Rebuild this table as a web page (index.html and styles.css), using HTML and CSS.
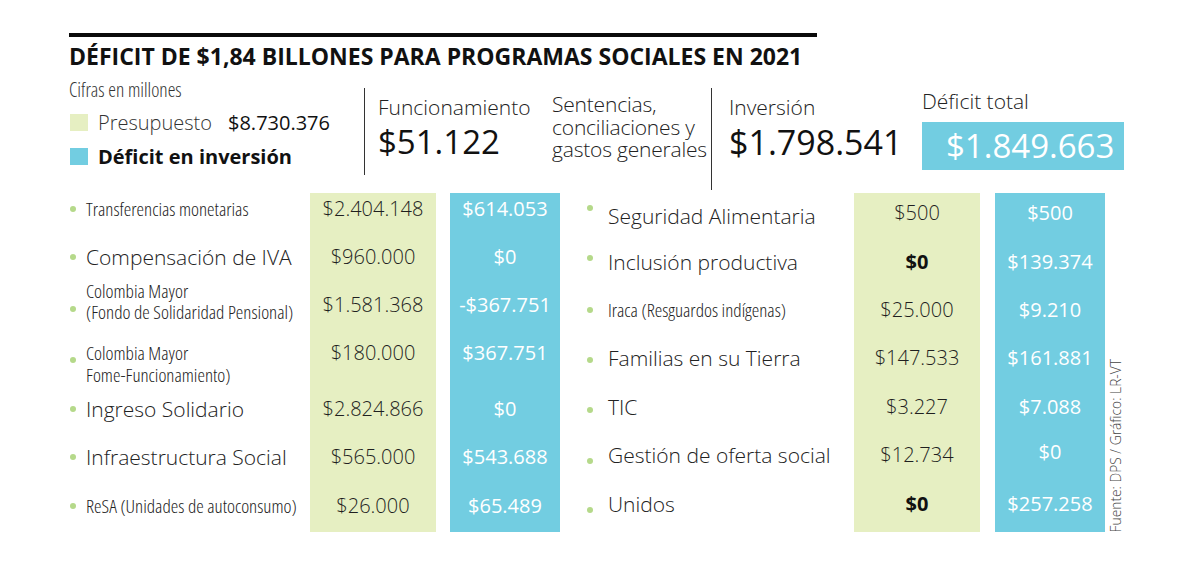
FILE: index.html
```html
<!DOCTYPE html>
<html lang="es">
<head>
<meta charset="utf-8">
<title>Déficit de $1,84 billones para programas sociales en 2021</title>
<link rel="stylesheet" href="styles.css">
</head>
<body>
<div class="page">
  <div class="rule"></div>
  <h1 class="title">DÉFICIT DE $1,84 BILLONES PARA PROGRAMAS SOCIALES EN 2021</h1>

  <div class="top">
    <div class="legend">
      <div class="cifras">Cifras en millones</div>
      <div class="leg-row">
        <span class="sq sq-green"></span>
        <span class="leg-label leg-label-w">Presupuesto</span>
        <span class="leg-amount">$8.730.376</span>
      </div>
      <div class="leg-row leg-row-2">
        <span class="sq sq-blue"></span>
        <span class="leg-label leg-bold">Déficit en inversión</span>
      </div>
    </div>
    <div class="vline vline-1"></div>
    <div class="stat stat-func">
      <div class="stat-label">Funcionamiento</div>
      <div class="stat-value">$51.122</div>
    </div>
    <div class="sentencias">
      <div class="sent-line">Sentencias,</div>
      <div class="sent-line">conciliaciones y</div>
      <div class="sent-line">gastos generales</div>
    </div>
    <div class="vline vline-2"></div>
    <div class="stat stat-inv">
      <div class="stat-label">Inversión</div>
      <div class="stat-value">$1.798.541</div>
    </div>
    <div class="stat stat-total">
      <div class="stat-label">Déficit total</div>
      <div class="total-box">$1.849.663</div>
    </div>
  </div>

  <div class="tables">
    <div class="table table-left">
      <div class="lab"><span class="dot"></span><span class="txt narrow">Transferencias monetarias</span></div>
      <div class="pres">$2.404.148</div>
      <div class="def">$614.053</div>

      <div class="lab"><span class="dot"></span><span class="txt big">Compensación de IVA</span></div>
      <div class="pres">$960.000</div>
      <div class="def">$0</div>

      <div class="lab two-a"><span class="dot"></span><span class="txt narrow">Colombia Mayor<br>(Fondo de Solidaridad Pensional)</span></div>
      <div class="pres">$1.581.368</div>
      <div class="def">-$367.751</div>

      <div class="lab two-b"><span class="dot"></span><span class="txt narrow">Colombia Mayor<br>Fome-Funcionamiento)</span></div>
      <div class="pres">$180.000</div>
      <div class="def">$367.751</div>

      <div class="lab"><span class="dot"></span><span class="txt big">Ingreso Solidario</span></div>
      <div class="pres">$2.824.866</div>
      <div class="def">$0</div>

      <div class="lab"><span class="dot"></span><span class="txt big">Infraestructura Social</span></div>
      <div class="pres">$565.000</div>
      <div class="def">$543.688</div>

      <div class="lab"><span class="dot"></span><span class="txt narrow">ReSA (Unidades de autoconsumo)</span></div>
      <div class="pres">$26.000</div>
      <div class="def">$65.489</div>
    </div>

    <div class="table table-right">
      <div class="lab"><span class="dot"></span><span class="txt big">Seguridad Alimentaria</span></div>
      <div class="pres">$500</div>
      <div class="def">$500</div>

      <div class="lab"><span class="dot"></span><span class="txt big">Inclusión productiva</span></div>
      <div class="pres strong">$0</div>
      <div class="def">$139.374</div>

      <div class="lab"><span class="dot"></span><span class="txt narrow">Iraca (Resguardos indígenas)</span></div>
      <div class="pres">$25.000</div>
      <div class="def">$9.210</div>

      <div class="lab"><span class="dot"></span><span class="txt big">Familias en su Tierra</span></div>
      <div class="pres">$147.533</div>
      <div class="def">$161.881</div>

      <div class="lab"><span class="dot"></span><span class="txt big">TIC</span></div>
      <div class="pres">$3.227</div>
      <div class="def">$7.088</div>

      <div class="lab"><span class="dot"></span><span class="txt big">Gestión de oferta social</span></div>
      <div class="pres">$12.734</div>
      <div class="def def-up">$0</div>

      <div class="lab"><span class="dot"></span><span class="txt big">Unidos</span></div>
      <div class="pres strong">$0</div>
      <div class="def">$257.258</div>
    </div>

    <div class="source">Fuente: DPS / Gráfico: LR-VT</div>
  </div>
</div>
</body>
</html>
```

FILE: styles.css
```css
* {
  box-sizing: border-box;
  margin: 0;
  padding: 0;
}

body {
  margin: 0;
  background: #ffffff;
  font-family: "Open Sans", "Noto Sans", sans-serif;
  color: #1f1f1f;
}

.page {
  width: 1200px;
  height: 568px;
  padding: 33px 0 0 69px;
  overflow: hidden;
}

.rule {
  width: 748px;
  height: 4px;
  background: #0a0a0a;
}

.title {
  margin-top: 5px;
  font-size: 23px;
  line-height: 28px;
  font-weight: 700;
  letter-spacing: 0;
  color: #111111;
  white-space: nowrap;
}

/* ---------- top summary ---------- */
.top {
  display: flex;
  height: 110px;
  margin-top: 10px;
}

.legend {
  width: 295px;
  flex: none;
}

.cifras,
.narrow {
  font-family: "Open Sans", "Noto Sans", sans-serif;
  font-stretch: 75%;
}

.cifras {
  font-size: 19.5px;
  line-height: 20px;
  font-weight: 300;
  color: #333333;
}

.leg-row {
  display: flex;
  align-items: center;
  height: 28px;
  margin-top: 8px;
}

.leg-row-2 {
  margin-top: 6px;
}

.sq {
  width: 18px;
  height: 17px;
  margin-left: 1px;
  margin-right: 10px;
  flex: none;
}

.sq-green { background: #e6efc2; }
.sq-blue { background: #72cde1; }

.leg-label {
  font-size: 20px;
  font-weight: 300;
  color: #333333;
  white-space: nowrap;
}

.leg-label-w {
  width: 130px;
}

.leg-bold {
  font-weight: 700;
  font-size: 20px;
  color: #111111;
}

.leg-amount {
  font-size: 20px;
  color: #111111;
}

.vline {
  width: 1px;
  flex: none;
  margin-top: 8px;
  background: #333333;
}

.vline-1 { height: 87px; }
.vline-2 { height: 102px; }

.stat {
  flex: none;
}

.stat-label {
  font-size: 21px;
  line-height: 26px;
  font-weight: 300;
  color: #222222;
  white-space: nowrap;
}

.stat-value {
  margin-top: 2px;
  font-size: 33px;
  line-height: 40px;
  color: #111111;
  white-space: nowrap;
}

.stat-inv .stat-value {
  font-size: 34px;
}

.stat-func {
  margin-left: 13px;
  width: 174px;
  padding-top: 14px;
}

.sentencias {
  flex: none;
  width: 159px;
  padding-top: 13px;
  font-size: 21px;
  font-weight: 300;
  letter-spacing: -0.2px;
  color: #222222;
  white-space: nowrap;
}

.sent-line {
  height: 22.5px;
  line-height: 22.5px;
}

.stat-inv {
  margin-left: 17px;
  width: 193px;
  padding-top: 14px;
}

.stat-total {
  width: 202px;
  padding-top: 8px;
}

.total-box {
  margin-top: 8px;
  height: 48px;
  padding-left: 24px;
  background: #72cde1;
  color: #ffffff;
  font-size: 33px;
  line-height: 48px;
  white-space: nowrap;
}

/* ---------- tables ---------- */
.tables {
  display: flex;
  margin-top: 3px;
}

.table {
  display: grid;
  flex: none;
}

.table-left {
  grid-template-columns: 227px 126px 110px;
  grid-template-rows: 40px 48px 48px 56px 48px 49px 50px;
  column-gap: 14px;
  margin-right: 25px;
}

.table-right {
  grid-template-columns: 254px 126px 110px;
  grid-template-rows: 45px 48px 48px 49px 48px 49px 52px;
  column-gap: 15px;
}

.pres,
.def {
  padding-top: 12px;
  text-align: center;
  font-size: 20px;
  line-height: 24px;
  font-weight: 300;
  white-space: nowrap;
}

.pres {
  background: #e6efc2;
  color: #1f1f1f;
}

.def {
  background: #72cde1;
  color: #ffffff;
  font-weight: 400;
}

.strong {
  font-weight: 700;
  color: #111111;
}

.def-up {
  padding-top: 9px;
}

.lab {
  display: flex;
  align-items: flex-start;
  padding-top: 12px;
}

.table-left > :nth-child(-n+3) { padding-top: 4px; }
.table-right > :nth-child(-n+3) { padding-top: 8px; }
.table-right > :nth-child(1) { padding-top: 11px; }

.dot {
  width: 6px;
  height: 6px;
  flex: none;
  margin-top: 9px;
  border-radius: 50%;
  background: #b5d98a;
}

.table-left .dot {
  margin-left: 1px;
  margin-right: 10px;
}

.table-right .dot {
  margin-left: 2px;
  margin-right: 15px;
}

.table-right > :nth-child(1) .dot { margin-top: 1px; }
.table-right > :nth-child(4) .dot { margin-top: 5px; }
.table-right > :nth-child(10) .dot { margin-top: 11px; }
.table-right > :nth-child(13) .dot { margin-top: 12px; }
.table-right > :nth-child(16) .dot { margin-top: 15px; }
.table-right > :nth-child(19) .dot { margin-top: 15px; }

.txt {
  line-height: 24px;
  white-space: nowrap;
  color: #222222;
}

.big {
  font-size: 21px;
  font-weight: 300;
}

.narrow {
  font-size: 19px;
  font-weight: 300;
}

.lab.two-a {
  padding-top: 0;
}

.lab.two-a .txt {
  line-height: 21px;
}

.lab.two-a .dot {
  margin-top: 25px;
}

.lab.two-b {
  padding-top: 13px;
}

.lab.two-b .txt {
  line-height: 22px;
}

.lab.two-b .dot {
  margin-top: 15px;
}

.source {
  align-self: flex-end;
  margin-left: 5px;
  writing-mode: vertical-rl;
  transform: rotate(180deg);
  font-size: 13.8px;
  line-height: 12px;
  font-weight: 300;
  color: #444444;
  white-space: nowrap;
}
```
